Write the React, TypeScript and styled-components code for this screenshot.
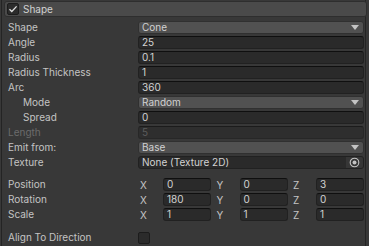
import React from "react";
import styled, { createGlobalStyle } from "styled-components";

const Global = createGlobalStyle`
  html, body { margin: 0; padding: 0; background: #383838; }
  body { font-family: Inter, "Noto Sans", sans-serif; font-size: 10px; color: #c4c4c4; }
  * { box-sizing: border-box; }
`;

const Root = styled.div`
  width: 369px;
  height: 246px;
  overflow: hidden;
  background: #383838;
`;

const Frame = styled.div`
  margin-left: 1px;
  width: 365px;
  border-left: 1px solid #242424;
  border-right: 1px solid #242424;
  display: flex;
  flex-direction: column;
  padding-bottom: 4px;
`;

const Header = styled.div`
  flex-shrink: 0;
  margin: 1px -2px 0 2px;
  height: 16px;
  background: #4a4a4a;
  border: 1px solid #2e2e2e;
  border-radius: 3px;
  display: flex;
  align-items: center;
  gap: 4px;
  padding-left: 2px;
  color: #d2d2d2;
`;

const Check = styled.span<{ $size?: number }>`
  flex-shrink: 0;
  width: ${(p) => p.$size ?? 12}px;
  height: ${(p) => p.$size ?? 12}px;
  border-radius: 2px;
  background: #2b2b2b;
  border: 1px solid #1c1c1c;
  display: inline-flex;
  align-items: center;
  justify-content: center;
`;

const Body = styled.div`
  display: flex;
  flex-direction: column;
  padding: 3px 0 0 6px;
`;

const Row = styled.div<{ $gapTop?: number }>`
  flex-shrink: 0;
  display: grid;
  grid-template-columns: 130px 226px;
  height: 15px;
  align-items: center;
  margin-top: ${(p) => p.$gapTop ?? 0}px;
`;

const Label = styled.div<{ $indent?: boolean; $disabled?: boolean }>`
  padding-left: ${(p) => (p.$indent ? 15 : 0)}px;
  color: ${(p) => (p.$disabled ? "#6b6b6b" : "#c4c4c4")};
  line-height: 15px;
  white-space: nowrap;
`;

const Field = styled.div<{ $disabled?: boolean }>`
  height: 13px;
  background: #2a2a2a;
  border: 1px solid #212121;
  border-top-color: #0f0f0f;
  border-radius: 3px;
  padding-left: 3px;
  line-height: 11px;
  color: ${(p) => (p.$disabled ? "#6b6b6b" : "#d2d2d2")};
  opacity: ${(p) => (p.$disabled ? 0.7 : 1)};
`;

const Dropdown = styled.div`
  height: 13px;
  background: #515151;
  border: 1px solid #303030;
  border-radius: 3px;
  padding: 0 3px;
  line-height: 11px;
  color: #d2d2d2;
  display: flex;
  justify-content: space-between;
  align-items: center;
`;

const Arrow = styled.span`
  width: 0;
  height: 0;
  border-left: 4px solid transparent;
  border-right: 4px solid transparent;
  border-top: 5px solid #c4c4c4;
  margin-right: 1px;
`;

const ObjectField = styled.div`
  height: 13px;
  background: #2a2a2a;
  border: 1px solid #212121;
  border-radius: 3px;
  padding-left: 3px;
  line-height: 11px;
  color: #d2d2d2;
  display: flex;
  justify-content: space-between;
  align-items: stretch;
`;

const PickButton = styled.span`
  width: 17px;
  background: #363636;
  border-radius: 0 2px 2px 0;
  display: flex;
  align-items: center;
  justify-content: center;
`;

const Vector = styled.div`
  display: grid;
  grid-template-columns: repeat(3, 1fr);
  column-gap: 3.5px;
`;

const Axis = styled.div`
  display: grid;
  grid-template-columns: 25px 1fr;
  align-items: center;
`;

const AxisLabel = styled.span`
  padding-left: 2px;
  color: #c4c4c4;
`;

const Dd = ({ v }: { v: string }) => (
  <Dropdown>
    <span>{v}</span>
    <Arrow />
  </Dropdown>
);

const Vec = ({ v }: { v: [string, string, string] }) => (
  <Vector>
    {(["X", "Y", "Z"] as const).map((a, i) => (
      <Axis key={a}>
        <AxisLabel>{a}</AxisLabel>
        <Field>{v[i]}</Field>
      </Axis>
    ))}
  </Vector>
);

export default function App() {
  return (
    <Root>
      <Global />
      <Frame>
        <Header>
          <Check>
            <svg width="10" height="10" viewBox="0 0 10 10">
              <path d="M1.5 5.2 L3.8 7.5 L8.6 2.4" fill="none" stroke="#e0e0e0" strokeWidth="1.3" />
            </svg>
          </Check>
          <span>Shape</span>
        </Header>
        <Body>
          <Row>
            <Label>Shape</Label>
            <Dd v="Cone" />
          </Row>
          <Row>
            <Label>Angle</Label>
            <Field>25</Field>
          </Row>
          <Row>
            <Label>Radius</Label>
            <Field>0.1</Field>
          </Row>
          <Row>
            <Label>Radius Thickness</Label>
            <Field>1</Field>
          </Row>
          <Row>
            <Label>Arc</Label>
            <Field>360</Field>
          </Row>
          <Row>
            <Label $indent>Mode</Label>
            <Dd v="Random" />
          </Row>
          <Row>
            <Label $indent>Spread</Label>
            <Field>0</Field>
          </Row>
          <Row>
            <Label $disabled>Length</Label>
            <Field $disabled>5</Field>
          </Row>
          <Row>
            <Label>Emit from:</Label>
            <Dd v="Base" />
          </Row>
          <Row>
            <Label>Texture</Label>
            <ObjectField>
              <span>None (Texture 2D)</span>
              <PickButton>
                <svg width="11" height="11" viewBox="0 0 11 11">
                  <circle cx="5.5" cy="5.5" r="4.3" fill="none" stroke="#c4c4c4" strokeWidth="1.1" />
                  <circle cx="5.5" cy="5.5" r="2" fill="#c4c4c4" />
                </svg>
              </PickButton>
            </ObjectField>
          </Row>
          <Row $gapTop={7}>
            <Label>Position</Label>
            <Vec v={["0", "0", "3"]} />
          </Row>
          <Row>
            <Label>Rotation</Label>
            <Vec v={["180", "0", "0"]} />
          </Row>
          <Row>
            <Label>Scale</Label>
            <Vec v={["1", "1", "1"]} />
          </Row>
          <Row $gapTop={8}>
            <Label>Align To Direction</Label>
            <Check $size={12} />
          </Row>
        </Body>
      </Frame>
    </Root>
  );
}
